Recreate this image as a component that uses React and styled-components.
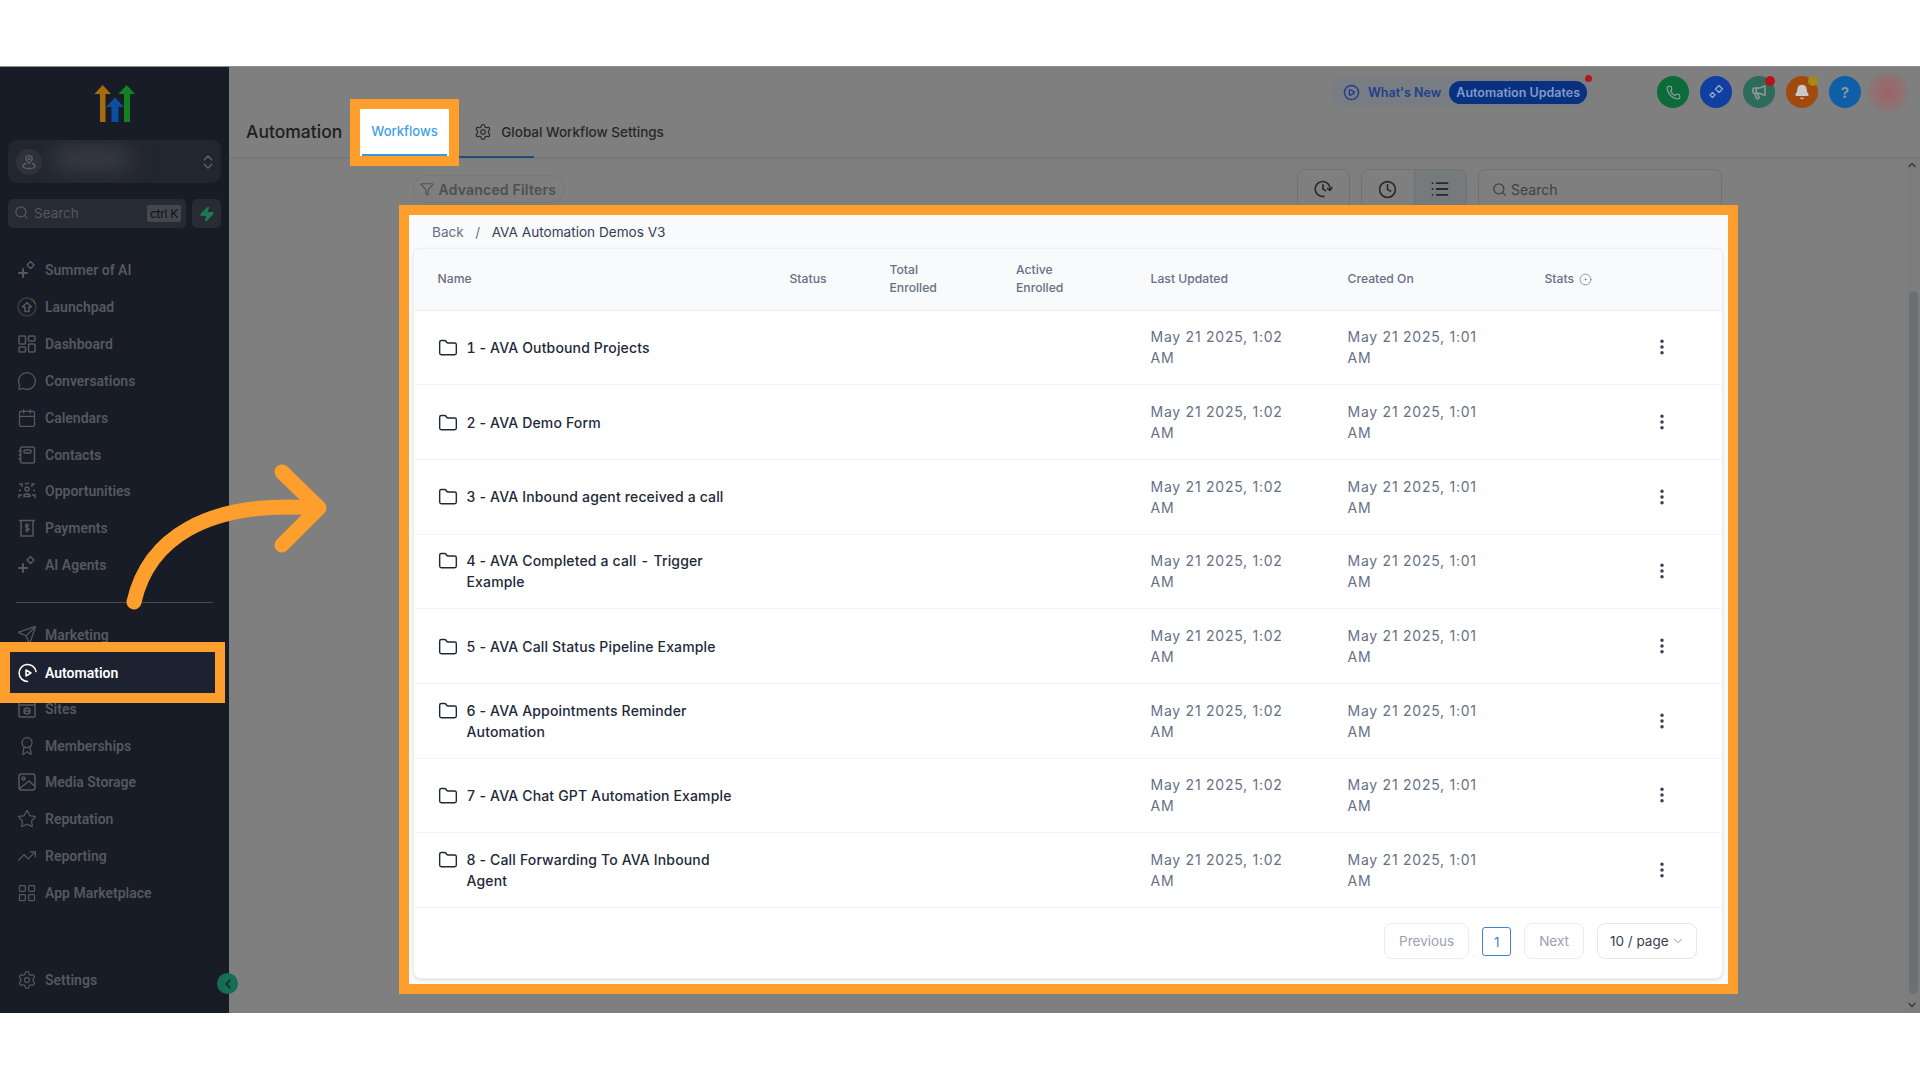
import React from 'react'
import styled, { createGlobalStyle } from 'styled-components'
import {
  Phone, Megaphone, Bell, Calendar, MessageCircle, Send, Award, Star, TrendingUp,
  LayoutGrid, Settings, Search, Filter, Clock, List, Folder, EllipsisVertical,
  ChevronLeft, ChevronDown, ChevronUp, ChevronsUpDown, Zap, CircleDot, CirclePlay,
} from 'lucide-react'

const GlobalStyle = createGlobalStyle`
  html, body { margin: 0; padding: 0; background: #fff; }
  * { box-sizing: border-box; }
  body { font-family: Inter, "Liberation Sans", sans-serif; }
`

const orange = '#fe9e2d'

const Page = styled.div`
  height: 1080px;
  padding-top: 66px;
  overflow: hidden;
`

const Frame = styled.div`
  position: relative;
  display: flex;
  height: 947px;
  background: #7e7f7e;
  border-top: 1px solid #8f8f8f;
`

/* sidebar */
const Sidebar = styled.aside`
  width: 229px;
  flex: none;
  display: flex;
  flex-direction: column;
  padding: 18px 8px 0;
  background: #171c26;
`

const Logo = styled.svg`
  display: block;
  width: 41px;
  height: 37px;
  margin: 0 auto 18px;
`

const Account = styled.div`
  position: relative;
  height: 43px;
  display: flex;
  align-items: center;
  justify-content: space-between;
  padding: 0 4px 0 8px;
  border-radius: 9px;
  background: #22262f;
  color: #5c5f65;
  overflow: hidden;
`

const AccountPin = styled.span`
  width: 26px;
  height: 26px;
  display: flex;
  align-items: center;
  justify-content: center;
  border-radius: 50%;
  background: #2e323a;
`

const BlurredName = styled.span`
  position: absolute;
  left: 44px;
  top: 8px;
  width: 80px;
  height: 22px;
  border-radius: 10px;
  background: #3a3e45;
  filter: blur(11px);
`

const SearchRow = styled.div`
  display: flex;
  gap: 6px;
  margin: 16px 0 24px;
`

const SideSearch = styled.div`
  flex: 1;
  height: 29px;
  display: flex;
  align-items: center;
  gap: 5px;
  padding: 0 5px 2px 6px;
  border-radius: 5px;
  background: #272b33;
  color: #55585e;
  font-size: 13.5px;
`

const KeyHint = styled.span`
  margin: 2px 0 0 auto;
  padding: 0 3px;
  height: 17px;
  line-height: 17px;
  border-radius: 2px;
  background: #44474c;
  color: #0f1218;
  font-size: 12px;
  letter-spacing: -0.3px;
`

const BoltButton = styled.div`
  width: 29px;
  height: 29px;
  display: flex;
  align-items: center;
  justify-content: center;
  border-radius: 5px;
  background: #272b33;
  color: #1c7a52;
`

const NavList = styled.nav`
  display: flex;
  flex-direction: column;
`

const NavItem = styled.div`
  height: 36.85px;
  display: flex;
  align-items: center;
  gap: 8px;
  padding-left: 9px;
  color: #55585e;
  font-family: Roboto, Inter, sans-serif;
  font-size: 14px;
  font-weight: 600;
  white-space: nowrap;
  svg { width: 20px; height: 20px; flex: none; stroke-width: 1.5; }
`

const NavRule = styled.div`
  height: 1px;
  margin: 18px 8px 14px;
  background: #45484e;
`

const SettingsItem = styled(NavItem)`
  margin-top: auto;
  margin-bottom: 15px;
`

const CollapseButton = styled.div`
  position: absolute;
  left: 217px;
  top: 906px;
  width: 21px;
  height: 21px;
  display: flex;
  align-items: center;
  justify-content: center;
  border-radius: 50%;
  background: #176d53;
  color: #0d2a2a;
`

/* main column */
const Main = styled.main`
  flex: 1;
  min-width: 0;
  display: flex;
  flex-direction: column;
`

const Header = styled.header`
  height: 92px;
  flex: none;
  border-bottom: 2px solid #767777;
`

const TopActions = styled.div`
  height: 50px;
  margin-bottom: 2px;
  display: flex;
  align-items: center;
  justify-content: flex-end;
  padding-right: 12px;
`

const NewsPill = styled.div`
  position: relative;
  height: 30px;
  display: flex;
  align-items: center;
  gap: 8px;
  padding: 0 4px 0 11px;
  margin-right: 66px;
  border-radius: 15px;
  background: #787c83;
  color: #1f3f8c;
  font-size: 12.5px;
  font-weight: 600;
`

const NewsChip = styled.span`
  height: 23px;
  line-height: 23px;
  padding: 0 7px;
  border-radius: 12px;
  background: #0a3080;
  color: #7f9bcb;
  font-size: 12.5px;
  font-weight: 600;
`

const RedDot = styled.i`
  position: absolute;
  right: -1px;
  top: -2px;
  width: 7px;
  height: 7px;
  border-radius: 50%;
  background: #b0161c;
`

const RoundButtons = styled.div`
  display: flex;
  gap: 11px;
`

const RoundButton = styled.div`
  position: relative;
  width: 32px;
  height: 32px;
  display: flex;
  align-items: center;
  justify-content: center;
  border-radius: 50%;
  background: ${p => p.$bg};
  color: ${p => p.$fg || '#8a9a9a'};
  font-size: 15px;
  font-weight: 700;
`

const Badge = styled.i`
  position: absolute;
  right: 0;
  top: 0;
  width: 10px;
  height: 10px;
  border-radius: 50%;
  background: ${p => p.$bg};
`

const Avatar = styled.div`
  width: 40px;
  height: 40px;
  margin-left: 7px;
  border-radius: 50%;
  background: radial-gradient(circle, #9c6468 0%, #936e70 40%, #7e7f7e 100%);
`

const TabsRow = styled.div`
  position: relative;
  height: 38px;
  display: flex;
  align-items: flex-start;
  padding-left: 17px;
`

const PageTitle = styled.h1`
  margin: 0;
  color: #1c1e20;
  font-size: 17.5px;
  line-height: 26px;
  font-weight: 500;
`

const GearTab = styled.div`
  display: flex;
  align-items: center;
  gap: 9px;
  margin-left: 132px;
  height: 26px;
  color: #26282a;
  font-size: 13.5px;
  font-weight: 500;
`

const TabLine = styled.i`
  position: absolute;
  left: 230px;
  bottom: -1px;
  width: 75px;
  height: 2px;
  background: #254a78;
`

const Body = styled.div`
  flex: 1;
  min-height: 0;
  display: flex;
`

const Content = styled.div`
  flex: 1;
  min-width: 0;
`

const Toolbar = styled.div`
  display: flex;
  justify-content: space-between;
  align-items: flex-start;
  padding: 10px 183px 0 183.5px;
`

const FilterPill = styled.div`
  height: 28px;
  margin-top: 6px;
  display: flex;
  align-items: center;
  gap: 5px;
  padding: 0 8px 0 6px;
  border-radius: 14px;
  border: 1px solid #777878;
  color: #4e5052;
  font-size: 14px;
  font-weight: 600;
  letter-spacing: 0.2px;
`

const ToolGroup = styled.div`
  display: flex;
  gap: 11.5px;
`

const ToolBox = styled.div`
  height: 40px;
  display: flex;
  border: 1px solid #717272;
  border-radius: 8px;
  overflow: hidden;
`

const ToolButton = styled.div`
  width: ${p => p.$w}px;
  display: flex;
  align-items: center;
  justify-content: center;
  color: #26282a;
  background: ${p => (p.$active ? '#767a7c' : 'transparent')};
  & + & { border-left: 1px solid #717272; }
`

const ToolSearch = styled(ToolBox)`
  width: 244px;
  align-items: center;
  gap: 4px;
  padding-left: 13px;
  color: #3e4043;
  font-size: 14px;
`

const ScrollTrack = styled.div`
  position: relative;
  width: 15px;
  flex: none;
  background: #7c7d7c;
`

const ScrollThumb = styled.div`
  position: absolute;
  left: 4px;
  right: 2px;
  top: 132px;
  bottom: 19px;
  border-radius: 5px;
  background: #6c6f73;
`

const ScrollArrow = styled.span`
  position: absolute;
  left: 1px;
  ${p => (p.$down ? 'bottom: 2px;' : 'top: 0;')}
  color: #3a3c3e;
  display: flex;
`

/* highlighted spots of the tutorial */
const Spot = styled.div`
  position: absolute;
  border: 10px solid ${orange};
`

const WorkflowSpot = styled(Spot)`
  left: 350px;
  top: 32px;
  width: 109px;
  height: 67px;
  display: flex;
  align-items: center;
  justify-content: center;
  background: #fff;
  color: #3d9fe8;
  font-size: 13px;
  font-weight: 500;
  padding-bottom: 3px;
  &::after {
    content: '';
    position: absolute;
    left: 2px;
    right: 2px;
    bottom: 0;
    height: 2px;
    background: #3b97df;
  }
`

const NavSpot = styled(Spot)`
  left: 0;
  top: 575px;
  width: 225px;
  height: 61px;
  display: flex;
  align-items: center;
  gap: 7px;
  padding-left: 8px;
  background: #1c2230;
  color: #fff;
  font-family: Roboto, Inter, sans-serif;
  font-size: 14px;
  font-weight: 600;
`

const TableSpot = styled(Spot)`
  left: 399px;
  top: 138px;
  width: 1339px;
  height: 789px;
  display: flex;
  flex-direction: column;
  padding: 0 5px 5px 4px;
  background: #f9fafb;
`

const Breadcrumb = styled.div`
  height: 33px;
  flex: none;
  display: flex;
  align-items: center;
  padding-left: 19px;
  color: #344054;
  font-size: 13.6px;
`

const BackLink = styled.span`
  color: #667085;
`

const CrumbSep = styled.span`
  margin: 0 11.5px;
  color: #667085;
`

const Card = styled.div`
  flex: 1;
  display: flex;
  flex-direction: column;
  background: #fff;
  border: 1px solid #eef0f3;
  border-radius: 8px;
  box-shadow: 0 1px 3px rgba(16, 24, 40, 0.12);
  overflow: hidden;
`

const columns = '352px 100px 126.5px 134.5px 197px 197px 100px 1fr'

const HeadRow = styled.div`
  height: 61.5px;
  flex: none;
  display: grid;
  grid-template-columns: ${columns};
  align-items: center;
  padding-left: 23.5px;
  background: #f9fafb;
  border-bottom: 1px solid #eaecf0;
  color: #667085;
  font-size: 12.2px;
  font-weight: 500;
  line-height: 18.5px;
`

const StatsHead = styled.span`
  display: flex;
  align-items: center;
  gap: 5px;
`

const Row = styled.div`
  height: 74.7px;
  flex: none;
  display: grid;
  grid-template-columns: ${columns};
  align-items: center;
  padding-left: 23.5px;
  border-bottom: 1px solid #f2f4f7;
`

const NameCell = styled.div`
  display: flex;
  align-items: flex-start;
  gap: 9px;
  grid-column: 1 / 5;
  color: #1d2939;
  font-size: 14px;
  font-weight: 500;
  line-height: 21px;
  letter-spacing: 0.15px;
  font-variant-numeric: tabular-nums;
  svg { flex: none; margin-top: 1px; }
`

const NameText = styled.span`
  max-width: 278px;
`

const DateCell = styled.div`
  width: 145px;
  color: #667085;
  font-size: 14px;
  line-height: 21px;
  letter-spacing: 0.75px;
`

const DateCellFirst = styled(DateCell)`
  grid-column: 5;
`

const Kebab = styled.div`
  grid-column: 8;
  display: flex;
  justify-content: center;
  width: 34px;
  color: #344054;
`

const Pager = styled.div`
  flex: 1;
  display: flex;
  align-items: flex-start;
  justify-content: flex-end;
  gap: 13px;
  padding: 15px 25px 0 0;
  color: #98a2b3;
  font-size: 13.5px;
  white-space: nowrap;
`

const PagerButton = styled.div`
  height: 36px;
  padding: 0 14px;
  display: flex;
  align-items: center;
  gap: 4px;
  border: 1px solid #eaecf0;
  border-radius: 8px;
`

const PageNumber = styled.div`
  width: 29px;
  height: 29px;
  margin-top: 4px;
  display: flex;
  align-items: center;
  justify-content: center;
  border: 1px solid #3f83d4;
  border-radius: 3px;
  color: #3f83d4;
`

const PageSize = styled(PagerButton)`
  width: 100px;
  padding: 0 5px 0 12px;
  gap: 2px;
  color: #344054;
  border-color: #e4e7ec;
`

const ArrowLayer = styled.svg`
  position: absolute;
  left: 0;
  top: -1px;
  width: 400px;
  height: 700px;
  pointer-events: none;
`

const NavGap = styled.div`
  height: 36.85px;
`

const SparkIcon = () => (
  <svg viewBox="0 0 20 20" fill="none" stroke="currentColor" strokeLinejoin="round" strokeLinecap="round">
    <path d="M13.5 1.5 17 5l-3.5 3.5L10 5z" />
    <path d="M6 9v8M2 13h8" strokeWidth="2" />
  </svg>
)

const LaunchIcon = () => (
  <svg viewBox="0 0 20 20" fill="none" stroke="currentColor">
    <circle cx="10" cy="10" r="9" opacity=".55" />
    <path d="M14 2.1A9 9 0 0 1 18.5 7" stroke="#6b4a35" />
    <path d="M10 5.5 14.5 10H12v4.5H8V10H5.5z" strokeLinejoin="round" />
  </svg>
)

const DashIcon = () => (
  <svg viewBox="0 0 20 20" fill="none" stroke="currentColor">
    <rect x="2" y="2" width="6.5" height="8" rx="1" />
    <rect x="11.5" y="2" width="6.5" height="5" rx="1" />
    <rect x="2" y="13" width="6.5" height="5" rx="1" />
    <rect x="11.5" y="10" width="6.5" height="8" rx="1" />
  </svg>
)

const ContactsIcon = () => (
  <svg viewBox="0 0 20 20" fill="none" stroke="currentColor">
    <rect x="3.5" y="2" width="14" height="16" rx="2" />
    <rect x="7" y="5" width="7" height="3" rx="1" />
    <path d="M1.5 6h3M1.5 10h3M1.5 14h3" />
  </svg>
)

const OppsIcon = () => (
  <svg viewBox="0 0 20 20" fill="none" stroke="currentColor">
    <circle cx="10" cy="8" r="2" />
    <path d="M7 14.5c0-2 6-2 6 0v1H7z" />
    <path d="M2 3h3v3M18 3h-3v3M2 17v-3h3M18 17v-3h-3M2 9.5h2M16 9.5h2M8 2.5h4" />
  </svg>
)

const PayIcon = () => (
  <svg viewBox="0 0 20 20" fill="none" stroke="currentColor">
    <path d="M2 2.5h16M4 2.5v15.5h12V2.5" />
    <path d="M12 7.5c-.5-1-3.5-1.2-3.5.6 0 1.8 3.5 1.2 3.5 3 0 1.7-3.2 1.5-3.8.4M10 5.5v9" />
  </svg>
)

const SitesIcon = () => (
  <svg viewBox="0 0 20 20" fill="none" stroke="currentColor">
    <rect x="2" y="2" width="16" height="16" rx="1" />
    <path d="M2 6h16" />
    <circle cx="10" cy="12" r="3" />
    <path d="M7 12h6" />
  </svg>
)

const ImageIcon = () => (
  <svg viewBox="0 0 20 20" fill="none" stroke="currentColor">
    <rect x="2" y="2" width="16" height="16" rx="2.5" />
    <circle cx="6.5" cy="6.5" r="1.5" />
    <path d="M2.5 16.5 12 9l6 5.5" />
  </svg>
)

const AutomationIcon = () => (
  <svg width="20" height="20" viewBox="0 0 20 20" fill="none" stroke="#fff" strokeWidth="1.5" strokeLinecap="round" strokeLinejoin="round">
    <path d="M18 8.5A8.5 8.5 0 1 0 9.5 18.5" />
    <path d="M8 7v6l5-3z" />
  </svg>
)

const PinIcon = () => (
  <svg width="16" height="16" viewBox="0 0 16 16" fill="none" stroke="currentColor" strokeWidth="1.3">
    <path d="M8 9.5C6.2 7.8 4.8 6.5 4.8 4.8a3.2 3.2 0 0 1 6.4 0C11.2 6.5 9.8 7.8 8 9.5z" />
    <circle cx="8" cy="4.8" r="1" />
    <path d="M5 9.5C3 10 2 10.8 2 12c0 1.5 2.5 2.5 6 2.5s6-1 6-2.5c0-1.2-1-2-3-2.5" />
  </svg>
)

const HistoryIcon = () => (
  <svg width="20" height="20" viewBox="0 0 24 24" fill="none" stroke="currentColor" strokeWidth="2" strokeLinecap="round" strokeLinejoin="round">
    <path d="M20.5 13A9 9 0 1 0 13 20.9" />
    <path d="M12 7v5l3 2" />
    <path d="M22.5 10.5 20.5 13.5 17.5 11.5" />
  </svg>
)

const GroupStars = () => (
  <svg width="18" height="18" viewBox="0 0 18 18" fill="none" stroke="#8da3c9" strokeWidth="1.5" strokeLinejoin="round">
    <path d="M12 2.5 15.5 6 12 9.5 8.5 6z" />
    <path d="M5.5 9.5 8 12l-2.5 2.5L3 12z" />
  </svg>
)

const navTop = [
  ['Summer of AI', <SparkIcon />],
  ['Launchpad', <LaunchIcon />],
  ['Dashboard', <DashIcon />],
  ['Conversations', <MessageCircle />],
  ['Calendars', <Calendar />],
  ['Contacts', <ContactsIcon />],
  ['Opportunities', <OppsIcon />],
  ['Payments', <PayIcon />],
  ['AI Agents', <SparkIcon />],
]

const navBottom = [
  ['Marketing', <Send />],
  ['Sites', <SitesIcon />],
  ['Memberships', <Award />],
  ['Media Storage', <ImageIcon />],
  ['Reputation', <Star />],
  ['Reporting', <TrendingUp />],
  ['App Marketplace', <LayoutGrid />],
]

const workflows = [
  '1\u2009-\u2009AVA Outbound Projects',
  '2\u2009-\u2009AVA Demo Form',
  '3\u2009-\u2009AVA Inbound agent received a call',
  '4\u2009-\u2009AVA Completed a call - Trigger Example',
  '5\u2009-\u2009AVA Call Status Pipeline Example',
  '6\u2009-\u2009AVA Appointments Reminder Automation',
  '7\u2009-\u2009AVA Chat GPT Automation Example',
  '8\u2009-\u2009Call Forwarding To AVA Inbound Agent',
]

function SideNav() {
  return (
    <Sidebar>
      <Logo viewBox="0 0 41 37">
        <path d="M8.7 0 17 9h-5.5v28H6V9H.3z" fill="#a56d0f" />
        <path d="M32.7 0 41 9h-5v28h-6V9h-5.7z" fill="#148024" />
        <path d="M21 12.5 30 22h-5.5v15h-7V22H12z" fill="#0b4f9e" />
      </Logo>
      <Account>
        <AccountPin><PinIcon /></AccountPin>
        <BlurredName />
        <ChevronsUpDown size={18} />
      </Account>
      <SearchRow>
        <SideSearch>
          <Search size={15} />
          Search
          <KeyHint>ctrl K</KeyHint>
        </SideSearch>
        <BoltButton><Zap size={16} fill="currentColor" /></BoltButton>
      </SearchRow>
      <NavList>
        {navTop.map(([label, icon]) => <NavItem key={label}>{icon}{label}</NavItem>)}
        <NavRule />
        {navBottom.map(([label, icon], i) => (
          <React.Fragment key={label}>
            <NavItem>{icon}{label}</NavItem>
            {i === 0 && <NavGap />}
          </React.Fragment>
        ))}
      </NavList>
      <SettingsItem><Settings />Settings</SettingsItem>
    </Sidebar>
  )
}

function WorkflowTable() {
  return (
    <TableSpot>
      <Breadcrumb>
        <BackLink>Back</BackLink>
        <CrumbSep>/</CrumbSep>
        AVA Automation Demos V3
      </Breadcrumb>
      <Card>
        <HeadRow>
          <span>Name</span>
          <span>Status</span>
          <span>Total<br />Enrolled</span>
          <span>Active<br />Enrolled</span>
          <span>Last Updated</span>
          <span>Created On</span>
          <StatsHead>Stats <CircleDot size={13} strokeWidth={1.3} /></StatsHead>
        </HeadRow>
        {workflows.map(name => (
          <Row key={name}>
            <NameCell>
              <Folder size={20} strokeWidth={1.7} />
              <NameText>{name}</NameText>
            </NameCell>
            <DateCellFirst>May 21 2025, 1:02 AM</DateCellFirst>
            <DateCell>May 21 2025, 1:01 AM</DateCell>
            <Kebab><EllipsisVertical size={20} strokeWidth={2.2} /></Kebab>
          </Row>
        ))}
        <Pager>
          <PagerButton>Previous</PagerButton>
          <PageNumber>1</PageNumber>
          <PagerButton>Next</PagerButton>
          <PageSize>10 / page <ChevronDown size={14} color="#c0c4cc" /></PageSize>
        </Pager>
      </Card>
    </TableSpot>
  )
}

export default function App() {
  return (
    <Page>
      <GlobalStyle />
      <Frame>
        <SideNav />
        <Main>
          <Header>
            <TopActions>
              <NewsPill>
                <CirclePlay size={17} />
                What's New
                <NewsChip>Automation Updates</NewsChip>
                <RedDot />
              </NewsPill>
              <RoundButtons>
                <RoundButton $bg="#0b6b3a"><Phone size={15} /></RoundButton>
                <RoundButton $bg="#0f3fa0"><GroupStars /></RoundButton>
                <RoundButton $bg="#2f6b5a"><Megaphone size={16} strokeWidth={2.5} /><Badge $bg="#b0161c" /></RoundButton>
                <RoundButton $bg="#a24a0d" $fg="#c9c9c9"><Bell size={16} fill="currentColor" /><Badge $bg="#a8890f" /></RoundButton>
                <RoundButton $bg="#0f5ea8">?</RoundButton>
              </RoundButtons>
              <Avatar />
            </TopActions>
            <TabsRow>
              <PageTitle>Automation</PageTitle>
              <GearTab><Settings size={18} strokeWidth={1.5} />Global Workflow Settings</GearTab>
              <TabLine />
            </TabsRow>
          </Header>
          <Body>
            <Content>
              <Toolbar>
                <FilterPill><Filter size={14} />Advanced Filters</FilterPill>
                <ToolGroup>
                  <ToolBox><ToolButton $w={51}><HistoryIcon /></ToolButton></ToolBox>
                  <ToolBox>
                    <ToolButton $w={51.5}><Clock size={19} strokeWidth={2} /></ToolButton>
                    <ToolButton $w={52} $active><List size={20} strokeWidth={2.2} /></ToolButton>
                  </ToolBox>
                  <ToolSearch><Search size={15} />Search</ToolSearch>
                </ToolGroup>
              </Toolbar>
            </Content>
            <ScrollTrack>
              <ScrollArrow><ChevronUp size={12} strokeWidth={3} /></ScrollArrow>
              <ScrollThumb />
              <ScrollArrow $down><ChevronDown size={12} strokeWidth={3} /></ScrollArrow>
            </ScrollTrack>
          </Body>
        </Main>
        <CollapseButton><ChevronLeft size={14} strokeWidth={3} /></CollapseButton>
        <NavSpot><AutomationIcon />Automation</NavSpot>
        <WorkflowSpot>Workflows</WorkflowSpot>
        <WorkflowTable />
        <ArrowLayer viewBox="0 66 400 700">
          <path d="M134 602C148 540 205 500 315 508" fill="none" stroke={orange} strokeWidth="15" strokeLinecap="round" />
          <path d="M282 472 319 508 282 545" fill="none" stroke={orange} strokeWidth="15" strokeLinecap="round" strokeLinejoin="round" />
        </ArrowLayer>
      </Frame>
    </Page>
  )
}
